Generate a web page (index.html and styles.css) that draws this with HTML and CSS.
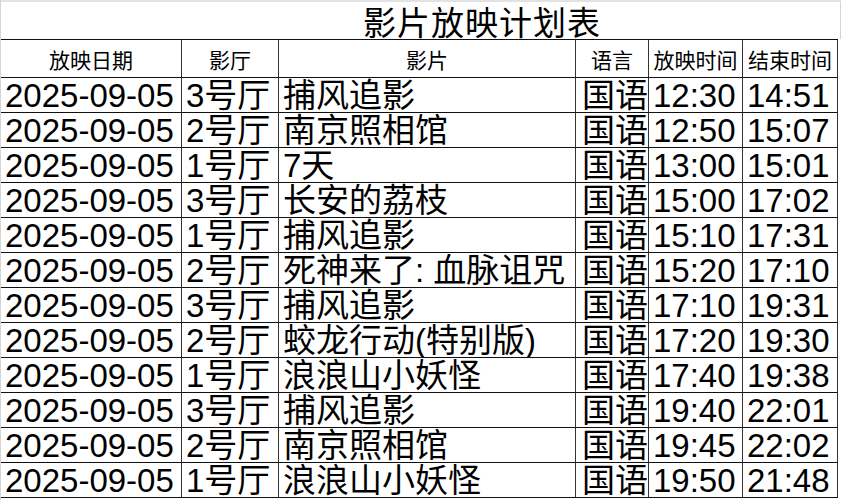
FILE: index.html
```html
<!DOCTYPE html>
<html lang="zh-CN">
<head>
<meta charset="utf-8">
<title>影片放映计划表</title>
<link rel="stylesheet" href="styles.css">
</head>
<body>
<div class="sheet">
  <div class="topstrip"></div>
  <div class="title-row"><h1 class="title">影片放映计划表</h1></div>
  <table class="schedule">
    <colgroup>
      <col class="c-date"><col class="c-hall"><col class="c-film"><col class="c-lang"><col class="c-start"><col class="c-end">
    </colgroup>
    <thead>
      <tr><th>放映日期</th><th>影厅</th><th>影片</th><th>语言</th><th>放映时间</th><th>结束时间</th></tr>
    </thead>
    <tbody>
      <tr><td class="date">2025-09-05</td><td>3号厅</td><td>捕风追影</td><td class="lang">国语</td><td>12:30</td><td>14:51</td></tr>
      <tr><td class="date">2025-09-05</td><td>2号厅</td><td>南京照相馆</td><td class="lang">国语</td><td>12:50</td><td>15:07</td></tr>
      <tr><td class="date">2025-09-05</td><td>1号厅</td><td>7天</td><td class="lang">国语</td><td>13:00</td><td>15:01</td></tr>
      <tr><td class="date">2025-09-05</td><td>3号厅</td><td>长安的荔枝</td><td class="lang">国语</td><td>15:00</td><td>17:02</td></tr>
      <tr><td class="date">2025-09-05</td><td>1号厅</td><td>捕风追影</td><td class="lang">国语</td><td>15:10</td><td>17:31</td></tr>
      <tr><td class="date">2025-09-05</td><td>2号厅</td><td>死神来了: 血脉诅咒</td><td class="lang">国语</td><td>15:20</td><td>17:10</td></tr>
      <tr><td class="date">2025-09-05</td><td>3号厅</td><td>捕风追影</td><td class="lang">国语</td><td>17:10</td><td>19:31</td></tr>
      <tr><td class="date">2025-09-05</td><td>2号厅</td><td>蛟龙行动(特别版)</td><td class="lang">国语</td><td>17:20</td><td>19:30</td></tr>
      <tr><td class="date">2025-09-05</td><td>1号厅</td><td>浪浪山小妖怪</td><td class="lang">国语</td><td>17:40</td><td>19:38</td></tr>
      <tr><td class="date">2025-09-05</td><td>3号厅</td><td>捕风追影</td><td class="lang">国语</td><td>19:40</td><td>22:01</td></tr>
      <tr><td class="date">2025-09-05</td><td>2号厅</td><td>南京照相馆</td><td class="lang">国语</td><td>19:45</td><td>22:02</td></tr>
      <tr><td class="date">2025-09-05</td><td>1号厅</td><td>浪浪山小妖怪</td><td class="lang">国语</td><td>19:50</td><td>21:48</td></tr>
    </tbody>
  </table>
</div>
</body>
</html>
```

FILE: styles.css
```css
html, body {
  margin: 0;
  padding: 0;
  background: #ffffff;
}

body {
  font-family: "Liberation Sans", "Noto Sans CJK SC", sans-serif;
  color: #000;
}

.sheet {
  width: 841px;
  height: 500px;
  overflow: hidden;
  border-left: 1px solid #d4d4d4;
  box-sizing: border-box;
}

.topstrip {
  height: 2px;
  background: #e2e2e2;
}

.title-row {
  height: 37px;
  display: flex;
  align-items: flex-end;
  border-right: 1px solid #d4d4d4;
  width: 839px;
}

.title {
  margin: 0;
  padding-left: 362px;
  font-family: "Noto Sans CJK SC", sans-serif;
  font-weight: 400;
  font-size: 33px;
  line-height: 35px;
  letter-spacing: 1px;
}

.schedule {
  border-collapse: separate;
  border-spacing: 0;
  table-layout: fixed;
  width: 837px;
  border-top: 1px solid #111;
}

.c-date { width: 181px; }
.c-hall { width: 97px; }
.c-film { width: 297px; }
.c-lang { width: 73px; }
.c-start { width: 94px; }
.c-end { width: 95px; }

.schedule th,
.schedule td {
  padding: 0;
  border-right: 1px solid #333;
  border-bottom: 1px solid #111;
  white-space: nowrap;
  overflow: hidden;
  vertical-align: middle;
  box-sizing: border-box;
}

.schedule th {
  height: 38px;
  font-family: "Noto Sans CJK SC", sans-serif;
  font-weight: 400;
  font-size: 21px;
  line-height: 36px;
  text-align: center;
}

.schedule td {
  height: 35px;
  font-size: 33px;
  line-height: 33px;
  text-align: left;
  padding-left: 4px;
}

.schedule td.date {
  padding-left: 4px;
}

.schedule td.lang {
  padding-left: 6px;
}
```
